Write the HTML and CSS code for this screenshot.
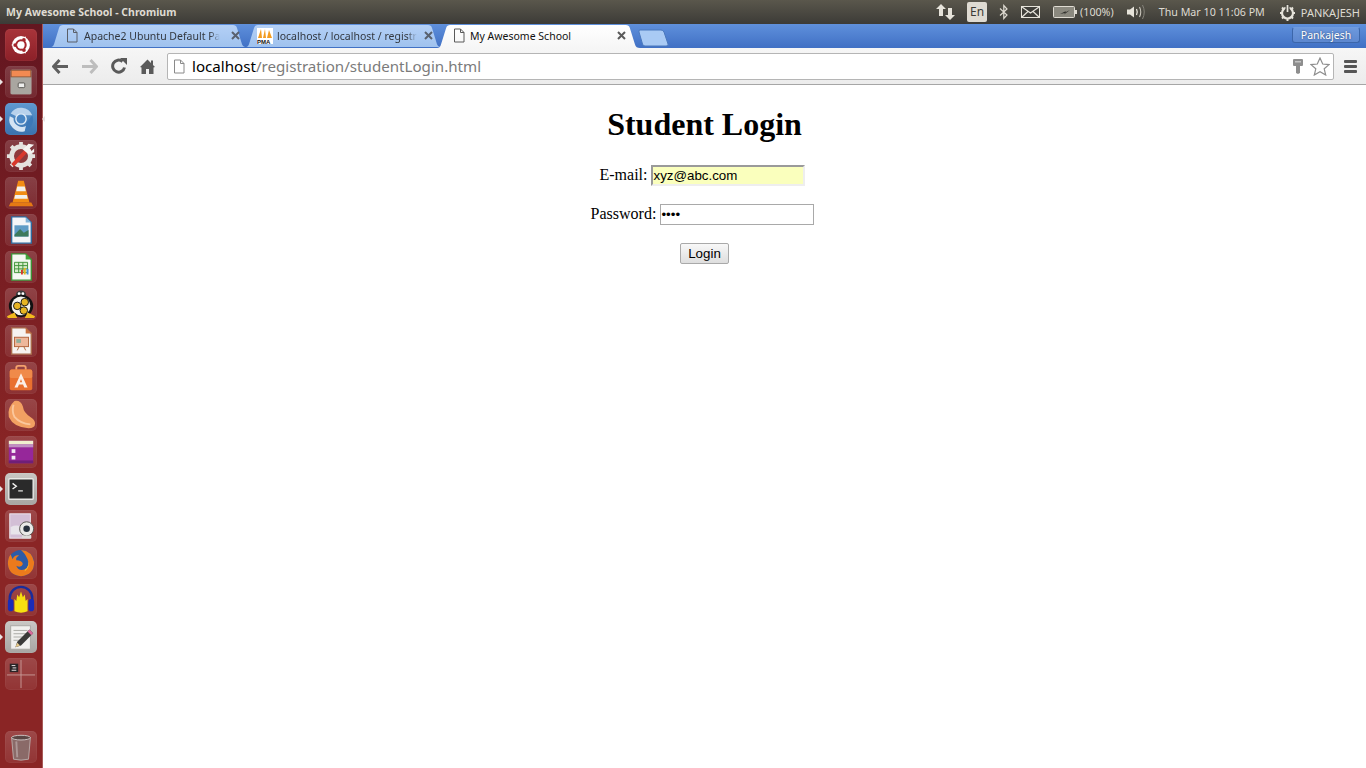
FILE: index.html
```html
<!DOCTYPE html>
<html lang="en">
<head>
    <meta charset="UTF-8">
    <meta name="viewport" content="width=device-width, initial-scale=1.0">
    <title>My Awesome School</title>
    <link rel="stylesheet" href="styles.css">
</head>
<body>

<div class="top-panel">
    <div class="window-title">My Awesome School - Chromium</div>
    <div class="indicators">
        <svg class="ind-net" width="20" height="18" viewBox="0 0 20 18"><path d="M5 1 L10 6 H7 V13 H3 V6 H0 Z M14 17 L9 12 H12 V5 H16 V12 H19 Z" fill="#e6e3da"/></svg>
        <div class="ind-lang">En</div>
        <svg class="ind-bt" width="10" height="16" viewBox="0 0 10 16"><path d="M1 4.500 L8 11 L4.800 14.500 V1.500 L8 5 L1 11.500" fill="none" stroke="#dfdbd2" stroke-width="1.200"/></svg>
        <svg class="ind-mail" width="19" height="12" viewBox="0 0 19 12"><rect x="0.500" y="0.500" width="18" height="11" fill="#3f3e39" stroke="#e6e3da"/><path d="M1 1 L9.500 7 L18 1 M1 11 L7 5.500 M18 11 L12 5.500" fill="none" stroke="#e6e3da" stroke-width="1.200"/></svg>
        <svg class="ind-batt" width="24" height="12" viewBox="0 0 24 12"><rect x="0.500" y="0.500" width="21" height="11" rx="1" fill="#8b897f" stroke="#dfdbd2"/><rect x="22" y="4" width="2" height="4" fill="#dfdbd2"/><path d="M7 8 L13 5 L12 6.500 L17 4 L11 8.500 L12 7 Z" fill="#2f2e2a"/></svg>
        <span class="ind-text ind-pct">(100%)</span>
        <svg class="ind-sound" width="20" height="16" viewBox="0 0 20 16"><path d="M0 5.500 H3 L7 2.500 V13.500 L3 10.500 H0 Z" fill="#e6e3da"/><path d="M9.500 5 Q11 8 9.500 11" fill="none" stroke="#e6e3da" stroke-width="1.300"/><path d="M12.500 3 Q15 8 12.500 13" fill="none" stroke="#c9c6bc" stroke-width="1.100"/><path d="M15.500 1 Q19 8 15.500 15" fill="none" stroke="#85837a" stroke-width="1"/></svg>
        <span class="ind-text ind-clock">Thu Mar 10 11:06 PM</span>
        <svg class="ind-power" width="17" height="17" viewBox="0 0 17 17"><circle cx="8.500" cy="9" r="5.500" fill="none" stroke="#e6e3da" stroke-width="2.200"/><path d="M8.500 0.500 V8" stroke="#3f3e39" stroke-width="4"/><path d="M8.500 1 V8" stroke="#e6e3da" stroke-width="1.800"/><path d="M1 9 H3 M14 9 H16 M3 3.500 L4.500 5 M14 3.500 L12.500 5 M3 14.500 L4.500 13 M14 14.500 L12.500 13 M8.500 15 V17" stroke="#e6e3da" stroke-width="2"/></svg>
        <span class="ind-text ind-user">PANKAJESH</span>
    </div>
</div>

<div class="desktop">
    <div class="launcher">
        <div class="launcher-top">
            <div class="tile tile-home">
                <svg viewBox="0 0 32 32"><circle cx="16" cy="16" r="9.500" fill="#fff"/><circle cx="16" cy="16" r="5" fill="none" stroke="#a5262c" stroke-width="2.200"/><path d="M16 16 L6 16 M16 16 L21 7.300 M16 16 L21 24.700" stroke="#fff" stroke-width="1.200"/><circle cx="9.800" cy="16" r="2" fill="#a5262c"/><circle cx="19.100" cy="10.600" r="2" fill="#a5262c"/><circle cx="19.100" cy="21.400" r="2" fill="#a5262c"/></svg>
            </div>
            <div class="tile pip-left">
                <svg viewBox="0 0 32 32"><rect x="5" y="3" width="22" height="26" rx="1.500" fill="#bdbab4"/><rect x="5" y="3" width="22" height="9" fill="#8f5a3c"/><rect x="6" y="4" width="20" height="6" fill="#f28a52"/><rect x="5" y="11" width="22" height="18" fill="#a9a6a0"/><rect x="13" y="17" width="7" height="5" rx="1" fill="#eeeeec" stroke="#55534f"/></svg>
            </div>
            <div class="tile tile-chromium pip-both">
                <svg viewBox="0 0 32 32"><path d="M5 10 A13 13 0 0 1 28 12 L20 12 A6 6 0 0 0 11 13 Z" fill="#b9d2ec"/><path d="M4 13 A13 13 0 0 0 20 29 L23 22 A9 9 0 0 1 8 15 Z" fill="#d5e4f3"/><path d="M28 12 A13 13 0 0 1 20 29 L22 20 Z" fill="#3c78b8"/><circle cx="16" cy="16" r="5.500" fill="#4a86c4" stroke="#e3eef8" stroke-width="1.500"/></svg>
            </div>
            <div class="tile">
                <svg viewBox="0 0 32 32"><circle cx="16" cy="16" r="10" fill="#8e3a3c" stroke="#e4e2de" stroke-width="5"/><path d="M16 1 V6 M16 26 V31 M1 16 H6 M26 16 H31 M5.500 5.500 L9 9 M23 23 L26.500 26.500 M5.500 26.500 L9 23" stroke="#e4e2de" stroke-width="4"/><path d="M7 26 L22 10" stroke="#d8382c" stroke-width="4"/><path d="M18 9 L24 3 L30 4 L25 8 L27 11 L30 8 L30 12 L24 14 Z" fill="#f4f3f0"/></svg>
            </div>
            <div class="tile">
                <svg viewBox="0 0 32 32"><path d="M5 26 H27 L29 30 H3 Z" fill="#e57a14"/><path d="M13 3 H19 L25 26 H7 Z" fill="#f28c14"/><path d="M12 9 H20 L21.200 14 H10.800 Z M9.800 18 H22.200 L23.200 22 H8.800 Z" fill="#f2f0ec"/></svg>
            </div>
            <div class="tile">
                <svg viewBox="0 0 32 32"><path d="M6 2 H21 L27 8 V30 H6 Z" fill="#f4f6f8" stroke="#2e6b9e" stroke-width="1.500"/><path d="M21 2 L27 8 H21 Z" fill="#7fb2d8"/><rect x="9" y="11" width="15" height="12" fill="#5f9cc6"/><path d="M9 21 L15 15 L19 19 L24 16 V23 H9 Z" fill="#3d7a5c"/></svg>
            </div>
            <div class="tile">
                <svg viewBox="0 0 32 32"><path d="M6 2 H21 L27 8 V30 H6 Z" fill="#f4f8f2" stroke="#3d9136" stroke-width="1.500"/><path d="M21 2 L27 8 H21 Z" fill="#43a53a"/><path d="M9 11 H23 V22 H9 Z M9 14.500 H23 M9 18 H23 M13.500 11 V22 M18 11 V22" fill="#d5ecc9" stroke="#3d9136" stroke-width="1"/><rect x="16" y="19" width="2" height="5" fill="#d8382c"/><rect x="19" y="17" width="2" height="7" fill="#e6b422"/><rect x="22" y="18" width="2" height="6" fill="#4a90d9"/></svg>
            </div>
            <div class="tile">
                <svg viewBox="0 0 32 32"><ellipse cx="16" cy="6" rx="5.500" ry="4.500" fill="#3a3a3a"/><circle cx="14" cy="5" r="1.500" fill="#fff"/><circle cx="18" cy="5" r="1.500" fill="#fff"/><ellipse cx="16" cy="18" rx="13" ry="12" fill="#111"/><ellipse cx="16" cy="18" rx="10" ry="10" fill="#f5f4ef"/><circle cx="20" cy="14" r="4" fill="#e6b422" stroke="#111"/><circle cx="12" cy="18" r="4" fill="#e6b422" stroke="#111"/><circle cx="19" cy="23" r="4" fill="#e6b422" stroke="#111"/><path d="M1 29 L9 25 L12 31 H2 Z M31 29 L23 25 L20 31 H30 Z" fill="#f2b91e"/></svg>
            </div>
            <div class="tile">
                <svg viewBox="0 0 32 32"><path d="M6 2 H21 L27 8 V30 H6 Z" fill="#f6f3f0" stroke="#a86a4a" stroke-width="1.500"/><path d="M21 2 L27 8 H21 Z" fill="#c8703e"/><rect x="9" y="12" width="15" height="10" fill="#eeb79a" stroke="#b06238"/><rect x="11" y="14" width="5" height="4" fill="#8fae9a"/><path d="M14 22 L12 26 M19 22 L21 26" stroke="#b06238"/></svg>
            </div>
            <div class="tile">
                <svg viewBox="0 0 32 32"><path d="M11 8 V5 Q11 3 13 3 H19 Q21 3 21 5 V8" fill="none" stroke="#f4a06c" stroke-width="2"/><rect x="4" y="7" width="24" height="22" rx="2" fill="#e9702f"/><rect x="4" y="7" width="24" height="9" rx="2" fill="#f08a4a"/><path d="M16 11 L23 26 H19.500 L18.200 23 H13.800 L12.500 26 H9 Z M16 17 L14.800 20.500 H17.200 Z" fill="#fbeee6" fill-rule="evenodd"/></svg>
            </div>
            <div class="tile">
                <svg viewBox="0 0 32 32"><path d="M9 1 Q1 8 3 18 Q8 29 24 30 Q31 30 31 25 Q31 21 26 18 Q19 14 18 7 Q16 0 9 1 Z" fill="#f2a062"/><path d="M8 5 Q6 12 9 18 Q15 25 26 26" fill="none" stroke="#fbc79c" stroke-width="2"/></svg>
            </div>
            <div class="tile">
                <svg viewBox="0 0 32 32"><rect x="3" y="4" width="26" height="24" rx="1" fill="#96279a"/><rect x="3" y="4" width="26" height="4" fill="#f0efcf"/><rect x="3" y="8" width="26" height="3" fill="#c08fc2"/><rect x="6" y="13" width="4" height="4" fill="#f3e6f3"/><rect x="6" y="20" width="4" height="4" fill="#f3e6f3"/><rect x="3" y="25" width="26" height="3" fill="#6f1f78"/></svg>
            </div>
            <div class="tile tile-light pip-left">
                <svg viewBox="0 0 32 32"><rect x="3" y="5" width="26" height="22" rx="1" fill="#2a2a2a" stroke="#e8e8e6" stroke-width="1.500"/><path d="M7 10 L11 13 L7 16" fill="none" stroke="#f4f4f2" stroke-width="1.500"/><path d="M13 18 H18" stroke="#d0d0ce" stroke-width="1.500"/></svg>
            </div>
            <div class="tile">
                <svg viewBox="0 0 32 32"><rect x="4" y="3" width="22" height="26" fill="#d3bfd6" stroke="#efe9f0"/><path d="M5 17 Q14 13 20 20 V25 H5 Z" fill="#e8e4ea"/><circle cx="22" cy="19" r="7.500" fill="#e9e9e7" stroke="#55534f"/><circle cx="22" cy="19" r="3.500" fill="#26303c"/><rect x="17" y="26" width="10" height="3" fill="#dcdcda"/></svg>
            </div>
            <div class="tile">
                <svg viewBox="0 0 32 32"><circle cx="16" cy="16" r="14" fill="#2b5ba8"/><path d="M16 2 Q28 3 30 15 Q30 29 16 30 Q3 29 2 17 Q2 10 5 7 L7 12 Q9 7 14 8 Q10 10 11 13 Q17 13 18 17 Q16 22 11 19 Q13 25 20 23 Q26 19 23 12 Q20 5 16 2 Z" fill="#ec7a1c"/><path d="M20 23 Q26 19 23 12 Q27 20 20 25 Z" fill="#f4b32a"/></svg>
            </div>
            <div class="tile">
                <svg viewBox="0 0 32 32"><path d="M4 18 V14 A12 12 0 0 1 28 14 V18" fill="none" stroke="#1a2c9a" stroke-width="2.500"/><rect x="2" y="15" width="6" height="13" rx="3" fill="#1a2cb8"/><rect x="24" y="15" width="6" height="13" rx="3" fill="#1a2cb8"/><path d="M9 28 V15 L11 17 L12 10 L14 13 L16 7 L18 13 L20 10 L21 17 L23 15 V28 Q16 31 9 28 Z" fill="#f7e010"/></svg>
            </div>
            <div class="tile tile-light pip-left">
                <svg viewBox="0 0 32 32"><rect x="5" y="4" width="21" height="25" fill="#f1f0ee" stroke="#a8a7a2"/><path d="M8 9 H23 M8 12.500 H23 M8 16 H19 M8 19.500 H16" stroke="#a8a7a2"/><path d="M10 27 L12 21 L25 8 L29 12 L16 25 Z" fill="#3a3a38"/><path d="M25 8 L29 12 L27 14 L23 10 Z" fill="#d86a9a"/><path d="M10 27 L12 22 L15 25 Z" fill="#e6c98a"/></svg>
            </div>
            <div class="tile">
                <svg viewBox="0 0 32 32"><path d="M16 1 V31 M1 17 H31" stroke="#c79a98" stroke-width="1"/><rect x="4" y="5" width="9" height="9" fill="#2a2426"/><path d="M6 7 H10 M7 9.500 H11 M6 12 H11" stroke="#f0ecec"/></svg>
            </div>
        </div>
        <div class="tile tile-trash">
            <svg viewBox="0 0 32 32"><path d="M6 6 H26 L24 29 Q16 31 8 29 Z" fill="#8a6a68" stroke="#b9aaa8"/><ellipse cx="16" cy="6" rx="10" ry="2.500" fill="#5a4644" stroke="#cfc7c6"/><path d="M11 10 L12 27" stroke="#ad9796" stroke-width="2"/></svg>
        </div>
    </div>

    <div class="browser">
        <div class="tabstrip">
            <div class="tab tab-first">
                <svg class="tab-shape" viewBox="0 0 200 24" preserveAspectRatio="none"><path d="M0 23 Q3 23 4 20 L9 3 Q10 0 13 0 H183 Q186 0 187 3 L192 20 Q193 23 197 23 Z" fill="url(#tabfill)"/><defs><linearGradient id="tabfill" x1="0" y1="0" x2="0" y2="1"><stop offset="0" stop-color="#b4d0f6"/><stop offset="1" stop-color="#9fc2ee"/></linearGradient></defs></svg>
                <svg class="tab-icon" width="12" height="15" viewBox="0 0 12 15"><path d="M1.500 1 H7.500 L11 4.500 V14 H1.500 Z M7.500 1 V4.500 H11" fill="none" stroke="#5a5f68"/></svg>
                <span class="tab-title">Apache2 Ubuntu Default Pa</span>
                <svg class="tab-close" width="9" height="9" viewBox="0 0 9 9"><path d="M1 1 L8 8 M8 1 L1 8" stroke="#59616e" stroke-width="2"/></svg>
            </div>
            <div class="tab tab-second">
                <svg class="tab-shape" viewBox="0 0 200 24" preserveAspectRatio="none"><path d="M0 23 Q3 23 4 20 L9 3 Q10 0 13 0 H183 Q186 0 187 3 L192 20 Q193 23 197 23 Z" fill="url(#tabfill)"/></svg>
                <svg class="tab-icon tab-icon-pma" width="16" height="16" viewBox="0 0 16 16"><rect width="16" height="16" fill="#fff"/><path d="M1 10 L4 1 L5 10 Z M6 10 L8 1 L9 10 Z M10 10 L12 2 L15 10 Z" fill="#f39c1f"/><text x="0" y="15.500" class="pma-text">PMA</text></svg>
                <span class="tab-title">localhost / localhost / registr</span>
                <svg class="tab-close" width="9" height="9" viewBox="0 0 9 9"><path d="M1 1 L8 8 M8 1 L1 8" stroke="#59616e" stroke-width="2"/></svg>
            </div>
            <div class="tab tab-active">
                <svg class="tab-shape" viewBox="0 0 200 24" preserveAspectRatio="none"><path d="M0 24 Q3 24 4 20 L9 3 Q10 0 13 0 H186 Q189 0 190 3 L195 20 Q196 24 200 24 Z" fill="url(#tabactive)"/><defs><linearGradient id="tabactive" x1="0" y1="0" x2="0" y2="1"><stop offset="0" stop-color="#fff"/><stop offset="1" stop-color="#f6f6f6"/></linearGradient></defs></svg>
                <svg class="tab-icon" width="12" height="15" viewBox="0 0 12 15"><path d="M1.500 1 H7.500 L11 4.500 V14 H1.500 Z M7.500 1 V4.500 H11" fill="none" stroke="#5a5a5a"/></svg>
                <span class="tab-title">My Awesome School</span>
                <svg class="tab-close" width="9" height="9" viewBox="0 0 9 9"><path d="M1 1 L8 8 M8 1 L1 8" stroke="#5a5a5a" stroke-width="2"/></svg>
            </div>
            <svg class="new-tab" width="33" height="18" viewBox="0 0 33 18"><path d="M3 1 Q1.500 1 2 3 L5.500 15 Q6 17 8 17 H29 Q32 17 31 15 L27 3 Q26 1 24 1 Z" fill="#a9caf4" stroke="#4a78bd"/></svg>
            <div class="profile">Pankajesh</div>
        </div>

        <div class="toolbar">
            <svg class="tool tool-back" width="16" height="15" viewBox="0 0 16 15"><path d="M7.500 1 L1.500 7.500 L7.500 14 M2 7.500 H16" fill="none" stroke="#5f5f5f" stroke-width="3"/></svg>
            <svg class="tool tool-forward" width="16" height="15" viewBox="0 0 16 15"><path d="M8.500 1 L14.500 7.500 L8.500 14 M14 7.500 H0" fill="none" stroke="#bdbdbd" stroke-width="3"/></svg>
            <svg class="tool tool-reload" width="16" height="16" viewBox="0 0 16 16"><path d="M13.500 9.500 A6 6 0 1 1 11.500 3.500" fill="none" stroke="#5a5a5a" stroke-width="3"/><path d="M9 0 L16 0 V7 Z" fill="#5a5a5a"/></svg>
            <svg class="tool tool-home" width="15" height="15" viewBox="0 0 15 15"><path d="M0 8 L7.500 0.500 L11 4 V1.500 H13 V6 L15 8 L13.500 8.500 V15 H9 V10 H6 V15 H1.500 V8.500 Z" fill="#5a5a5a"/></svg>
            <div class="omnibox">
                <svg class="omni-page" width="12" height="15" viewBox="0 0 12 15"><path d="M1.500 1 H7.500 L11 4.500 V14 H1.500 Z M7.500 1 V4.500 H11" fill="#fff" stroke="#8a8a8a"/></svg>
                <div class="url"><span class="url-host">localhost</span>/registration/studentLogin.html</div>
                <svg class="omni-key" width="10" height="15" viewBox="0 0 10 15"><path d="M1 0 H9 Q10 0 10 1 V6 Q10 7 9 7 H7 V14 L5 15 L3 14 V7 H1 Q0 7 0 6 V1 Q0 0 1 0 Z" fill="#8e8e8e"/><rect x="2" y="2" width="6" height="1.500" fill="#c4c4c4"/></svg>
                <svg class="omni-star" width="20" height="19" viewBox="0 0 20 19"><path d="M10 1 L12.700 7 L19 7.600 L14.200 11.800 L15.700 18 L10 14.700 L4.300 18 L5.800 11.800 L1 7.600 L7.300 7 Z" fill="#fff" stroke="#8e8e8e" stroke-width="1.200"/></svg>
            </div>
            <div class="menu-btn"><span></span><span></span><span></span></div>
        </div>

        <div class="page">
            <h1>Student Login</h1>
            <form onsubmit="return false">
                <p class="field">E-mail: <input class="autofilled" type="text" value="xyz@abc.com"></p>
                <p class="field">Password: <input class="pass" type="password" value="abcd"></p>
                <p><button type="submit">Login</button></p>
            </form>
        </div>
    </div>
</div>

</body>
</html>
```

FILE: styles.css
```css
* {
    box-sizing: border-box;
}

html, body {
    margin: 0;
    height: 100%;
    overflow: hidden;
}

body {
    display: flex;
    flex-direction: column;
    font-family: "Noto Sans", sans-serif;
}

/* desktop top panel */
.top-panel {
    height: 24px;
    flex: none;
    display: flex;
    justify-content: space-between;
    align-items: center;
    background: linear-gradient(#5a574c, #3c3b37);
    color: #dfdbd2;
    font-size: 11px;
}

.window-title {
    padding-left: 6px;
    font-weight: bold;
    font-size: 10.5px;
}

.indicators {
    display: flex;
    align-items: center;
    padding-right: 6px;
}

.ind-net { margin-right: 11px; }
.ind-lang {
    width: 20px;
    height: 20px;
    margin-right: 12px;
    background: #dfdbd2;
    border-radius: 2px;
    color: #3c3b37;
    text-align: center;
    font-size: 12px;
    line-height: 20px;
}
.ind-bt { margin-right: 12px; }
.ind-mail { margin-right: 13px; }
.ind-batt { margin-right: 3px; }
.ind-text { font-size: 10.700px; white-space: nowrap; }
.ind-pct { margin-right: 13px; }
.ind-sound { margin-right: 12px; }
.ind-clock { margin-right: 14px; }
.ind-power { margin-right: 5px; }
.ind-user { font-size: 11px; }

.desktop {
    flex: 1;
    display: flex;
    min-height: 0;
}

/* launcher */
.launcher {
    width: 43px;
    flex: none;
    display: flex;
    flex-direction: column;
    justify-content: space-between;
    align-items: center;
    padding: 5px 6px 5px 5px;
    background: linear-gradient(#631620, #8a2525 60%);
    border-right: 1px solid #a85a58;
}

.launcher-top {
    display: flex;
    flex-direction: column;
    gap: 5px;
}

.tile {
    position: relative;
    width: 32px;
    height: 32px;
    border-radius: 5px;
    background: linear-gradient(rgba(255,255,255,.16), rgba(255,255,255,.07));
    box-shadow: inset 0 0 0 1px rgba(255,255,255,.04);
}

.tile svg {
    display: block;
    width: 30px;
    height: 30px;
    margin: 1px;
}

.tile-home {
    background: linear-gradient(#a8343a, #8c2028);
}

.tile-chromium {
    background: linear-gradient(#5f98d0, #3a72ae);
}

.tile-light {
    background: linear-gradient(#c9c7c4, #a8a5a2);
}

.pip-left::before,
.pip-both::before,
.pip-both::after {
    content: "";
    position: absolute;
    top: 13px;
    border: 3px solid transparent;
}

.pip-left::before,
.pip-both::before {
    left: -5px;
    border-left-color: #e9e4e4;
}

.pip-both::after {
    right: -8px;
    border-right-color: #e9e4e4;
}

/* browser */
.browser {
    flex: 1;
    display: flex;
    flex-direction: column;
    min-width: 0;
}

.tabstrip {
    position: relative;
    height: 24px;
    flex: none;
    display: flex;
    align-items: flex-start;
    padding: 1px 0 0 7px;
    background: linear-gradient(#5f90dc, #4070c4);
}

.tab {
    position: relative;
    width: 200px;
    height: 23px;
    margin-right: -5px;
    display: flex;
    align-items: center;
    padding: 0 9px 2px 16px;
    font-size: 10.500px;
    color: #33383f;
}

.tab-second {
    margin-right: -8px;
}

.tab-active {
    width: 203px;
    margin-right: -3px;
    color: #111;
}

.tab-shape {
    position: absolute;
    left: 0;
    top: 0;
    width: 100%;
    height: 100%;
}

.tab-icon,
.tab-title,
.tab-close {
    position: relative;
}

.tab-icon {
    flex: none;
    margin-right: 6px;
}

.tab-active .tab-icon {
    margin-right: 5px;
}

.tab-icon-pma {
    margin-left: -4px;
    margin-right: 4px;
}

.pma-text {
    font-family: "Liberation Sans", sans-serif;
    font-size: 6px;
    font-weight: bold;
    fill: #111;
}

.tab-title {
    flex: 0 1 auto;
    overflow: hidden;
    white-space: nowrap;
}

.tab-first .tab-title,
.tab-second .tab-title {
    -webkit-mask-image: linear-gradient(to right, #000 calc(100% - 10px), transparent);
    mask-image: linear-gradient(to right, #000 calc(100% - 10px), transparent);
}

.tab-close {
    flex: none;
    margin-left: auto;
    margin-right: 1.500px;
}

.tab-second .tab-close { margin-right: 3.500px; }
.tab-active .tab-close { margin-right: 5.500px; }

.new-tab {
    position: relative;
    margin-top: 4px;
    flex: none;
}

.profile {
    position: absolute;
    right: 6px;
    top: 3px;
    width: 68px;
    height: 16px;
    border: 1px solid #3c66aa;
    border-top-color: #6f9bdf;
    border-radius: 3px;
    background: rgba(255,255,255,.12);
    color: #fff;
    font-size: 10.500px;
    line-height: 14px;
    text-align: center;
    text-shadow: 0 0 2px #23416f;
}

.toolbar {
    height: 37px;
    flex: none;
    display: flex;
    align-items: center;
    padding: 0 9px 0 9px;
    background: linear-gradient(#f6f6f6, #ececec);
    border-bottom: 1px solid #a6a6a6;
}

.tool { flex: none; }
.tool-back { margin-right: 14px; }
.tool-forward { margin-right: 13px; }
.tool-reload { margin-right: 13px; }
.tool-home { margin-right: 12px; }

.omnibox {
    flex: 1;
    height: 27px;
    display: flex;
    align-items: center;
    padding: 0 3px 0 5px;
    background: #fff;
    border: 1px solid #b5b5b5;
    border-radius: 2px;
}

.omni-page { flex: none; margin-right: 7px; }

.url {
    flex: 1;
    font-size: 15.130px;
    color: #7b7b7b;
    white-space: nowrap;
}

.url-host { color: #000; }

.omni-key { flex: none; margin-right: 7px; }
.omni-star { flex: none; }

.menu-btn {
    flex: none;
    width: 13px;
    margin-left: 10px;
    display: flex;
    flex-direction: column;
    gap: 2px;
}

.menu-btn span {
    height: 3px;
    background: #555;
    border-radius: 1px;
}

/* page content */
.page {
    flex: 1;
    background: #fff;
    padding: 8px;
    text-align: center;
    color: #000;
    font-family: "Liberation Serif", serif;
    font-size: 16px;
}

.page h1 {
    margin: 13px 0 22px;
    font-size: 32px;
}

.page p {
    margin: 18px 0;
}

.page form p:first-child {
    margin-top: 0;
}

.page .field {
    padding-right: 4px;
}

.page input {
    width: 154px;
    height: 21px;
    padding: 1px 0;
    font-family: "Liberation Sans", sans-serif;
    font-size: 13.333px;
    color: #000;
}

.autofilled {
    border: 2px solid;
    border-color: #9a9a9a #eeeeee #eeeeee #9a9a9a;
    background: #faffbd;
}

.pass {
    border: 1px solid #a9a9a9;
    background: #fff;
}

.page button {
    width: 49px;
    height: 21px;
    padding: 0;
    border: 1px solid #a9a9a9;
    border-radius: 2px;
    background: linear-gradient(#f8f8f8, #dedede);
    font-family: "Liberation Sans", sans-serif;
    font-size: 13.333px;
    color: #000;
}
```
